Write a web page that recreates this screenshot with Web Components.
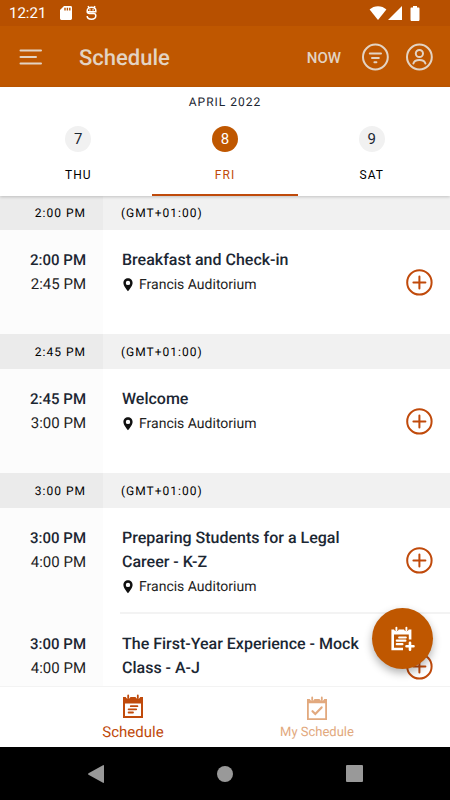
<!DOCTYPE html>
<html lang="en">
<head>
<meta charset="utf-8">
<meta name="viewport" content="width=device-width, initial-scale=1">
<title>Schedule</title>
<style>
html, body { margin: 0; height: 100%; }
body { font-family: Roboto, "Liberation Sans", sans-serif; color: #1c2733; background: #fff; text-rendering: geometricPrecision; }
</style>
</head>
<body>
<schedule-app></schedule-app>
<script>
const define = (name, html, setup) => {
  const template = document.createElement('template');
  template.innerHTML = html;
  customElements.define(name, class extends HTMLElement {
    constructor() {
      super();
      this.attachShadow({ mode: 'open' }).append(template.content.cloneNode(true));
    }
    connectedCallback() { if (setup) setup(this, this.shadowRoot); }
  });
};

const ICONS = {
  menu: ['0 0 24 18', '<path d="M2.5 2.5H23M2.5 9H18M2.5 15.5H23" fill="none" stroke="currentColor" stroke-width="2" stroke-linecap="round"/>'],
  filter: ['0 0 28 28', '<g fill="none" stroke="currentColor" stroke-width="2" stroke-linecap="round"><circle cx="14.4" cy="14" r="12.4"/><path d="M8.8 10.6H20M11 15H17.8M13.4 19.3H15.4"/></g>'],
  person: ['0 0 28 28', '<g fill="none" stroke="currentColor" stroke-width="2" stroke-linecap="round"><circle cx="14.4" cy="14" r="12.4"/><circle cx="14.4" cy="10.5" r="3.6"/><path d="M8.4 20.5C9.6 15.8 19.2 15.8 20.4 20.5"/></g>'],
  plus: ['0 0 28 28', '<g fill="none" stroke="currentColor" stroke-width="2"><circle cx="14.4" cy="14.4" r="12.2"/><path d="M14.4 8.4V20.4M8.4 14.4H20.4" stroke-linecap="round"/></g>'],
  pin: ['0 0 10 14', '<path fill="currentColor" fill-rule="evenodd" d="M5 .3C2.4.3.4 2.4.4 4.9C.4 8.1 5 13.2 5 13.2S9.6 8.1 9.6 4.9C9.6 2.4 7.6.3 5 .3ZM5 2.7A2.2 2.2 0 1 1 5 7.1A2.2 2.2 0 0 1 5 2.7Z"/>'],
  agenda: ['0 0 20 24', '<path fill="currentColor" fill-rule="evenodd" d="M0 3H2.7A2.5 2.5 0 0 0 7.5 3H12.5A2.5 2.5 0 0 0 17.3 3H20V24H0ZM2 9.5V22H18V9.5Z"/><path d="M5.2 1.4V4M14.8 1.4V4" stroke="currentColor" stroke-width="1.8" stroke-linecap="round"/><path d="M7.8 12.2H14.4M5.6 15.3H13.2M5.6 18.5H10" stroke="currentColor" stroke-width="1.8" stroke-linecap="round"/>'],
  check: ['0 0 20 24', '<path fill="currentColor" fill-rule="evenodd" d="M0 3H2.7A2.5 2.5 0 0 0 7.5 3H12.5A2.5 2.5 0 0 0 17.3 3H20V24H0ZM1.8 7.2V22.2H18.2V7.2Z"/><path d="M5.2 1.4V4M14.8 1.4V4" stroke="currentColor" stroke-width="1.8" stroke-linecap="round"/><path d="M5.5 15.2L8.3 18L14.6 11.4" fill="none" stroke="currentColor" stroke-width="2.2" stroke-linecap="round"/>'],
  agendaAdd: ['0 0 24 26', '<path fill="currentColor" d="M.4 3.4H3A2.5 2.5 0 0 0 7.8 3.4H13A2.5 2.5 0 0 0 17.8 3.4H20.4V13.5H17.8V8.6H3V21.8H12V24.2H.4Z"/><path d="M5.4 1.6V4.2M15.4 1.6V4.2" stroke="currentColor" stroke-width="1.9" stroke-linecap="round"/><path d="M8.2 11.5H14.8M5.8 14.7H14.4M5.8 18.2H11.4" stroke="currentColor" stroke-width="2.2" stroke-linecap="round"/><path d="M19 16.8V23.8M15.5 20.3H22.5" stroke="currentColor" stroke-width="2.6" stroke-linecap="round"/>'],
  sdcard: ['0 0 12 14', '<path fill="currentColor" fill-rule="evenodd" d="M4 0H10.6Q12 0 12 1.4V12.6Q12 14 10.6 14H1.4Q0 14 0 12.6V4ZM4.3 1.8V4.4H5.7V1.8ZM6.7 1.8V4.4H8.1V1.8ZM9.1 1.8V4.4H10.5V1.8Z"/>'],
  debug: ['0 0 12 16', '<g fill="none" stroke="currentColor" stroke-width="1.5"><path d="M2 1.2L3 2.8M9 1.2L8 2.8"/><path d="M1.2 6.8H9.8V5.8C9.8 1.2 1.2 1.2 1.2 5.8V6.6Q1.2 8.6 3.5 8.6H7.6Q9.8 8.6 9.8 10.8Q9.8 14.2 5.5 14.2Q1.2 14.2 1.2 11"/></g><path d="M3.2 4.2H4.6V5.4H3.2ZM6.4 4.2H7.8V5.4H6.4Z" fill="currentColor"/>'],
  wifi: ['0 0 18 14', '<path fill="currentColor" d="M9 14L.6 3.6C5-.9 13-.9 17.4 3.6Z"/>'],
  signal: ['0 0 14 14', '<path fill="currentColor" d="M14 0V14H0Z"/>'],
  battery: ['0 0 10 15', '<path fill="currentColor" d="M3 0H7V1.6H8.8Q9.5 1.6 9.5 2.8V13.6Q9.5 15 8.8 15H1.2Q.5 15 .5 13.6V2.8Q.5 1.6 1.2 1.6H3Z"/>'],
  back: ['0 0 16 18', '<path fill="currentColor" d="M15 .2Q16 -.2 16 1V17Q16 18.2 15 17.8L.5 9.8Q-.3 9 .5 8.2Z"/>'],
  home: ['0 0 16 16', '<circle cx="8" cy="8" r="8" fill="currentColor"/>'],
  recent: ['0 0 17 17', '<rect width="17" height="17" rx="1" fill="currentColor"/>']
};

define('app-icon', `<style>
:host { display: block; flex: none; line-height: 0; }
svg { display: block; }
</style><svg aria-hidden="true"></svg>`, (host, root) => {
  const [box, body] = ICONS[host.getAttribute('name')];
  const svg = root.querySelector('svg');
  const [, , w, h] = box.split(' ');
  svg.setAttribute('viewBox', box);
  svg.setAttribute('width', w);
  svg.setAttribute('height', h);
  svg.innerHTML = body;
});

define('status-bar', `<style>
:host { display: flex; align-items: center; height: 26px; padding: 0 30px 0 9px; background: #b75000; color: #fff; font-size: 15px; line-height: 28px; }
.left, .right { display: flex; align-items: center; }
.left { gap: 14px; flex: 1; }
.right { gap: 1px; }
.right :last-child { margin-left: 7px; }
</style>
<div class="left"><span>12:21</span><app-icon name="sdcard"></app-icon><app-icon name="debug"></app-icon></div>
<div class="right"><app-icon name="wifi"></app-icon><app-icon name="signal"></app-icon><app-icon name="battery"></app-icon></div>`);

define('app-header', `<style>
:host { display: flex; align-items: center; height: 61px; padding: 0 17px 0 18px; background: #bf5700; color: #e3d3c3; }
h1 { flex: 1; margin: 0 0 0 37px; padding-top: 4px; font-size: 22px; font-weight: 500; line-height: 28px; }
button { border: 0; padding: 0; background: none; color: inherit; font: inherit; cursor: pointer; }
.actions { display: flex; align-items: center; gap: 16px; }
.now { margin-right: 4px; padding-top: 2px; font-size: 15px; font-weight: 500; line-height: 28px; }
</style>
<button aria-label="Menu"><app-icon name="menu"></app-icon></button>
<h1>Schedule</h1>
<div class="actions">
<button class="now">NOW</button>
<button aria-label="Filter"><app-icon name="filter"></app-icon></button>
<button aria-label="Profile"><app-icon name="person"></app-icon></button>
</div>`);

define('day-tab', `<style>
:host { display: block; flex: 1; }
button { display: flex; flex-direction: column; align-items: center; gap: 13px; width: 100%; height: 80px; padding: 10px 0 0; border: 0; border-bottom: 2px solid transparent; background: none; color: #1c2733; font: inherit; cursor: pointer; box-sizing: border-box; }
.num { width: 26px; height: 26px; border-radius: 50%; background: #f1f1f1; font-size: 15px; line-height: 26px; text-align: center; }
.name { font-size: 12px; line-height: 20px; letter-spacing: 1px; color: #000; }
:host([selected]) button { border-color: #bf4a0b; }
:host([selected]) .num { background: #bf5700; color: #fff; }
:host([selected]) .name { color: #bf4a0b; }
</style><button role="tab"><span class="num"></span><span class="name"><slot></slot></span></button>`, (host, root) => {
  root.querySelector('.num').textContent = host.getAttribute('day');
  root.querySelector('button').setAttribute('aria-selected', host.hasAttribute('selected'));
});

define('day-picker', `<style>
:host { display: block; position: relative; z-index: 1; background: #fff; box-shadow: 0 1px 3px rgba(0,0,0,.2); }
.month { padding-top: 5px; font-size: 12px; line-height: 20px; letter-spacing: 1px; text-align: center; height: 24px; }
.days { display: flex; padding: 0 5px; }
</style><div class="month">APRIL 2022</div><div class="days" role="tablist"><slot></slot></div>`);

define('time-group', `<style>
:host { display: block; }
header { display: flex; height: 35px; background: #f1f1f1; color: #000; font-size: 12px; line-height: 36px; letter-spacing: 1px; }
.time { flex: none; width: 103px; padding-right: 17px; box-sizing: border-box; background: #ebebeb; text-align: right; }
.zone { padding-left: 18px; }
</style><header><span class="time"></span><span class="zone">(GMT+01:00)</span></header><slot></slot>`, (host, root) => {
  root.querySelector('.time').textContent = host.getAttribute('time');
});

define('session-row', `<style>
:host { display: flex; min-height: 104px; }
.times { flex: none; width: 103px; padding: 18px 17px 0 0; box-sizing: border-box; background: #fcfcfc; text-align: right; font-size: 15px; line-height: 24px; }
.start { font-weight: 500; }
.end { color: #222; }
.body { flex: 1; display: flex; align-items: center; gap: 24px; margin-left: 17px; padding-right: 17px; min-width: 0; }
:host([divided]) .body { border-bottom: 2px solid #f3f3f3; }
.text { flex: 1; align-self: stretch; padding: 18px 0 12px 2px; }
h2 { margin: 0; font-size: 16px; font-weight: 500; line-height: 24px; }
p { display: flex; align-items: center; gap: 6px; margin: 0; padding-left: 1px; font-size: 14px; line-height: 26px; height: 26px; color: #222; }
p app-icon { color: #111; }
button { border: 0; padding: 0; background: none; color: #c04a0b; cursor: pointer; }
</style>
<div class="times"><div class="start"></div><div class="end"></div></div>
<div class="body"><div class="text"><h2><slot></slot></h2><p><app-icon name="pin"></app-icon><span class="place"></span></p></div>
<button aria-label="Add to my schedule"><app-icon name="plus"></app-icon></button></div>`, (host, root) => {
  for (const key of ['start', 'end', 'place']) root.querySelector('.' + key).textContent = host.getAttribute(key) || '';
});

define('nav-item', `<style>
:host { display: block; flex: 1; color: #c04a0b; }
:host([muted]) { color: #e2a97e; }
a { display: flex; flex-direction: column; align-items: center; gap: 4px; padding-top: 7px; color: inherit; font-size: 15px; line-height: 20px; text-decoration: none; }
:host([muted]) a { padding-top: 9px; gap: 3px; font-size: 13px; }
</style><a href="#"><slot></slot></a>`, (host, root) => {
  const icon = document.createElement('app-icon');
  icon.setAttribute('name', host.getAttribute('icon'));
  root.querySelector('a').prepend(icon);
});

define('bottom-nav', `<style>
:host { display: flex; height: 61px; padding: 0 41px; border-top: 1px solid #f3f3f3; box-sizing: border-box; background: #fff; }
</style><slot></slot>`);

define('system-nav', `<style>
:host { display: flex; justify-content: center; align-items: center; gap: 113px; height: 53px; background: #000; color: #999; }
button { border: 0; padding: 0; background: none; color: inherit; }
</style>
<button aria-label="Back"><app-icon name="back"></app-icon></button>
<button aria-label="Home"><app-icon name="home"></app-icon></button>
<button aria-label="Recent"><app-icon name="recent"></app-icon></button>`);

define('add-button', `<style>
:host { display: block; }
button { display: flex; align-items: center; justify-content: center; width: 61px; height: 61px; padding: 0; border: 0; border-radius: 50%; background: #bf5700; color: #fff; box-shadow: 0 4px 8px rgba(0,0,0,.3); cursor: pointer; }
</style><button aria-label="Add event"><app-icon name="agendaAdd"></app-icon></button>`);

define('schedule-app', `<style>
:host { display: flex; flex-direction: column; height: 100vh; }
.stage { position: relative; flex: 1; min-height: 0; margin-top: -1px; }
main { height: 100%; overflow: hidden; }
add-button { position: absolute; right: 17px; bottom: 17px; }
</style>
<status-bar></status-bar>
<app-header></app-header>
<day-picker>
<day-tab day="7">THU</day-tab><day-tab day="8" selected>FRI</day-tab><day-tab day="9">SAT</day-tab>
</day-picker>
<div class="stage">
<main>
<time-group time="2:00 PM"><session-row start="2:00 PM" end="2:45 PM" place="Francis Auditorium">Breakfast and Check-in</session-row></time-group>
<time-group time="2:45 PM"><session-row start="2:45 PM" end="3:00 PM" place="Francis Auditorium">Welcome</session-row></time-group>
<time-group time="3:00 PM">
<session-row divided start="3:00 PM" end="4:00 PM" place="Francis Auditorium">Preparing Students for a Legal Career - K-Z</session-row>
<session-row start="3:00 PM" end="4:00 PM">The First-Year Experience - Mock Class - A-J</session-row>
</time-group>
</main>
<add-button></add-button>
</div>
<bottom-nav><nav-item icon="agenda">Schedule</nav-item><nav-item icon="check" muted>My Schedule</nav-item></bottom-nav>
<system-nav></system-nav>`);
</script>
</body>
</html>
